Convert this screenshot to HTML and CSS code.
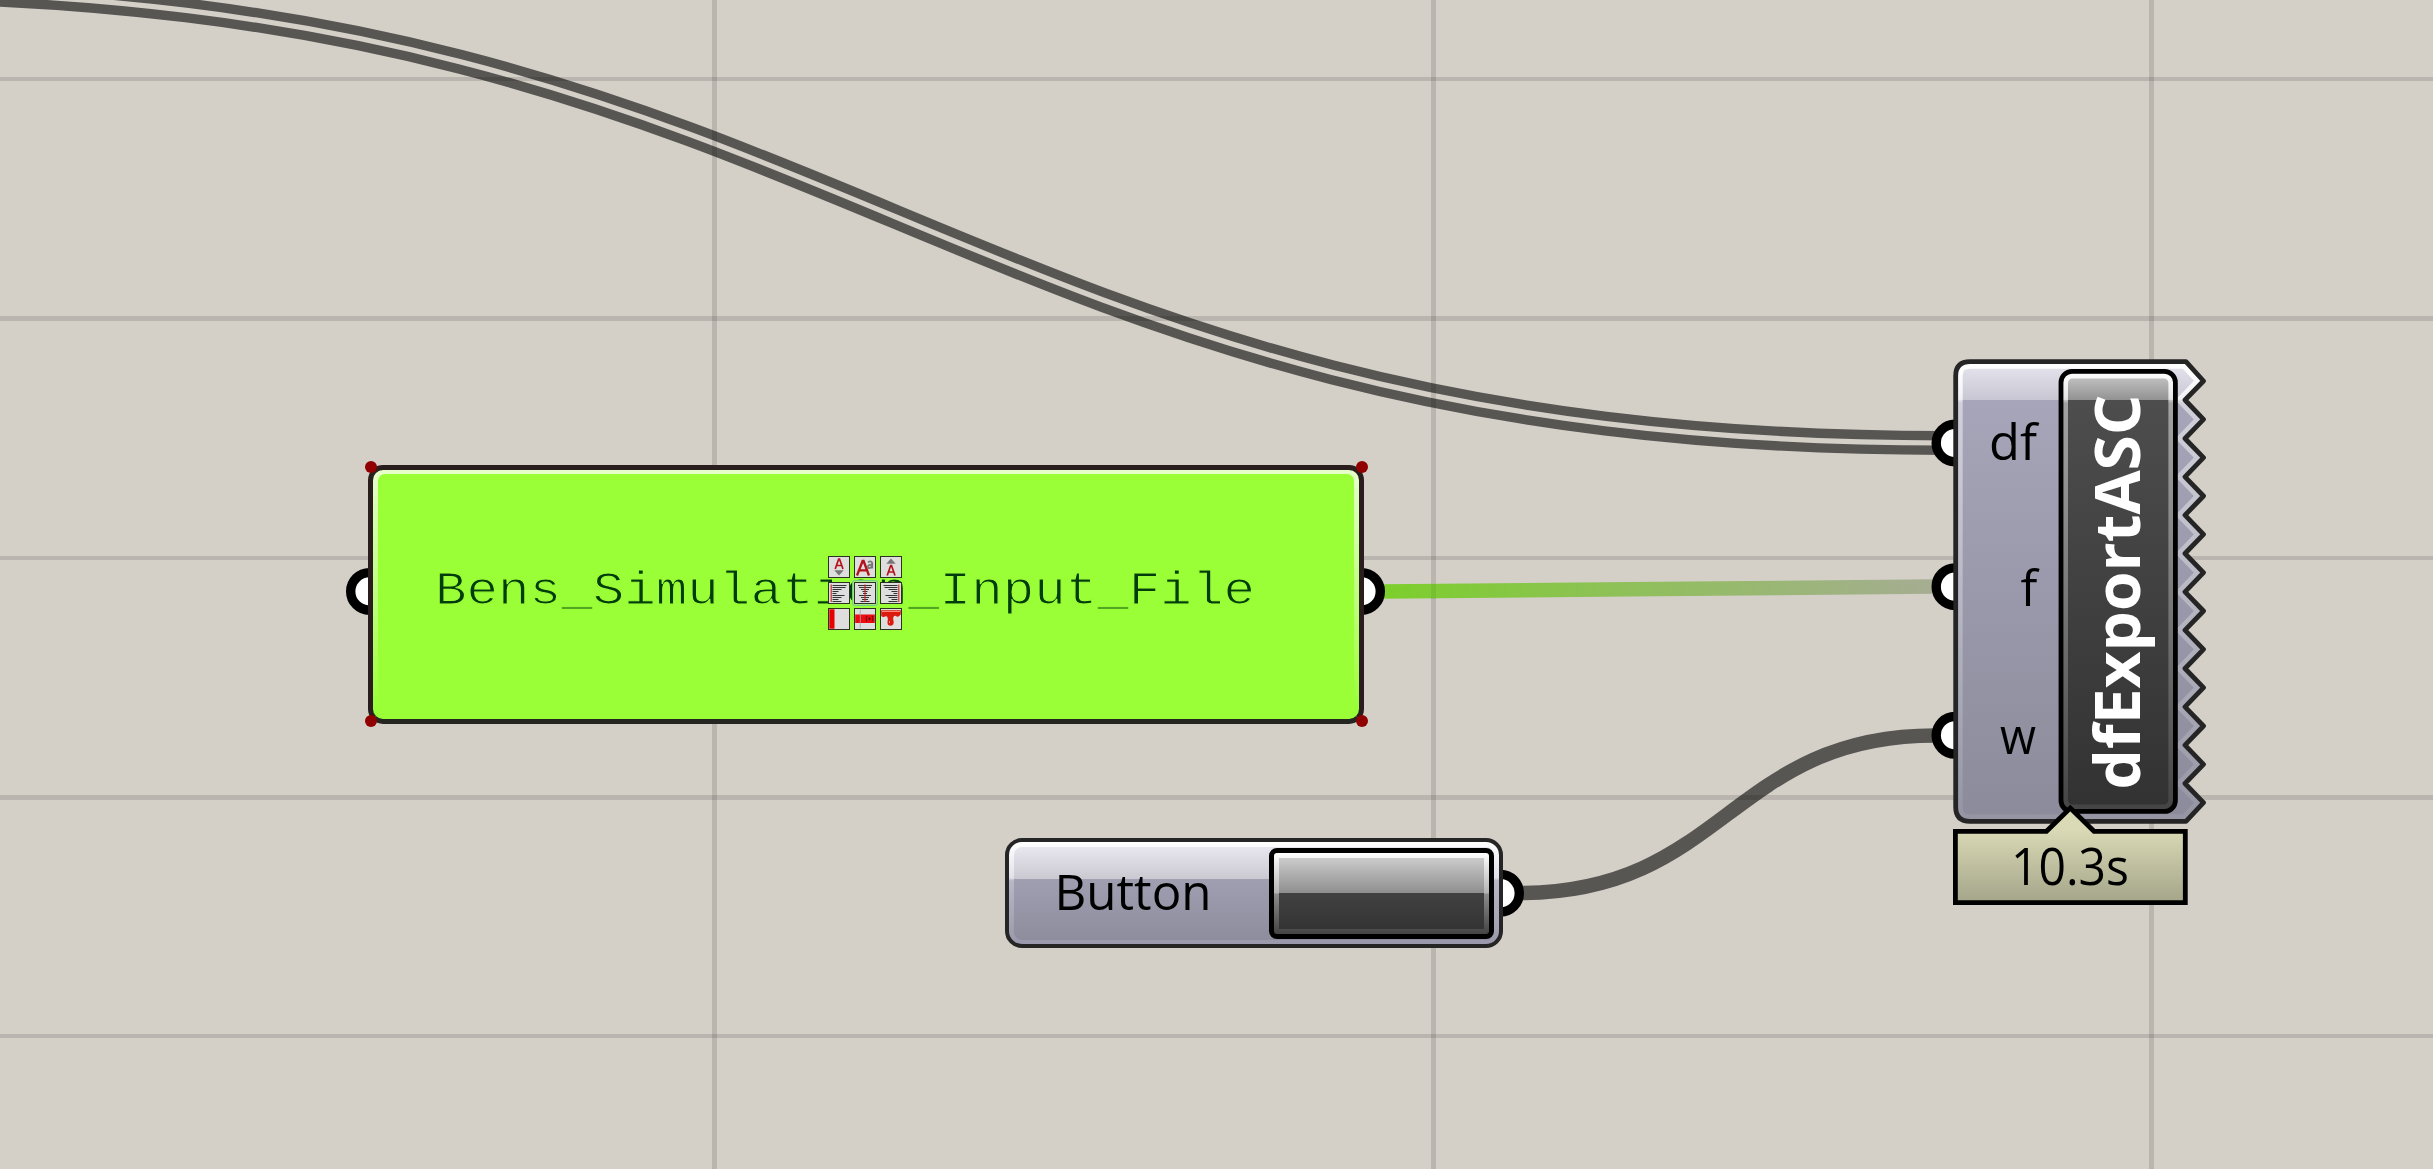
FILE: index.html
```html
<!DOCTYPE html>
<html lang="en">
<head>
<meta charset="utf-8">
<title>Definition canvas</title>
<link rel="stylesheet" href="styles.css">
</head>
<body>
<main class="canvas">
  <svg class="wires" viewBox="0 0 2433 1169">
    <defs>
      <mask id="core" maskUnits="userSpaceOnUse" x="-200" y="-100" width="2700" height="1300">
        <rect x="-200" y="-100" width="2700" height="1300" fill="#fff"/>
        <path d="M-153-9C860-9 932 443 1945 443" fill="none" stroke="#000" stroke-width="5.2"/>
      </mask>
      <linearGradient id="fade" gradientUnits="userSpaceOnUse" x1="1380" y1="0" x2="1935" y2="0">
        <stop offset="0" stop-color="#7ccf2b"/><stop offset="1" stop-color="#a6ad93"/>
      </linearGradient>
    </defs>
    <g class="grid">
      <path d="M714.5 0V1169M1433.5 0V1169M2151.500 0V1169"/>
      <path d="M0 79H2433M0 318.5H2433M0 558H2433M0 797.5H2433M0 1036H2433"/>
    </g>
    <path class="wire double" mask="url(#core)" d="M-153-9C860-9 932 443 1945 443"/>
    <path class="wire" d="M1520 893C1724 893 1731 735.5 1935 735.5"/>
    <path class="wire green" d="M1380 591.5C1565 591.5 1750 586.5 1935 586.5"/>
    <path class="grid" d="M1433.5 584V598.500" opacity=".5"/>
    <g class="grip">
      <circle cx="369.5" cy="591.4" r="18.8"/>
      <circle cx="1361.5" cy="591.4" r="18.8"/>
      <circle cx="1500.5" cy="893.2" r="18.8"/>
      <circle cx="1955" cy="443" r="18.8"/>
      <circle cx="1955" cy="586.7" r="18.8"/>
      <circle cx="1955" cy="735.3" r="18.8"/>
    </g>
  </svg>

  <section class="panel">
    <i class="handle tl"></i><i class="handle tr"></i><i class="handle bl"></i><i class="handle br"></i>
    <div class="panel-body">
      <svg class="panel-text" viewBox="0 0 986 249"><text x="62" y="134.300" textLength="820" lengthAdjust="spacingAndGlyphs">Bens_Simulation_Input_File</text></svg>
    </div>
    <div class="tools">
      <svg viewBox="0 0 22 22"><rect class="key" x=".5" y=".5" width="21" height="21"/><path d="M7.2 13L10.7 3h.8L15 13M8.6 9.5h5" fill="none" stroke="#b5121b" stroke-width="1.7"/><path d="M6.3 14.2h9.4L11 19.5z" fill="#777"/></svg>
      <svg viewBox="0 0 22 22"><rect class="key" x=".5" y=".5" width="21" height="21"/><path d="M3 19.5L8.6 5h1L15 19.5M5 14.3h8" fill="none" stroke="#b5121b" stroke-width="2.3"/><path d="M14 6.2q4-2 4.2 1.2v5M18 8.8q-4-.3-4 1.8 0 2 2 1.4l2-1.4" fill="none" stroke="#777" stroke-width="1.8"/></svg>
      <svg viewBox="0 0 22 22"><rect class="key" x=".5" y=".5" width="21" height="21"/><path d="M6.3 7.8h9.4L11 2.5z" fill="#777"/><path d="M7.2 19.5L10.7 9.5h.8l3.5 10M8.6 16h5" fill="none" stroke="#b5121b" stroke-width="1.7"/></svg>

      <svg viewBox="0 0 22 22"><rect class="key" x=".5" y=".5" width="21" height="21"/><path d="M4.5 3.5h14M4.5 5.5h13M4.5 7.5h9M4.5 9.5h6M4.5 11.500h4M4.500 13.500h12M4.500 15.500h9M4.500 17.500h6M4.500 19.500h9" class="lines"/><path d="M3.200 2.500v17.500" class="rule"/></svg>
      <svg viewBox="0 0 22 22"><rect class="halo" x="-1.500" y="-1.500" width="25" height="25" rx="2"/><rect class="key" x=".5" y=".5" width="21" height="21"/><path d="M4 3.500h14M5 5.500h12M7 7.500h8M8.500 9.500h5M9 11.500h4M5 13.500h12M7 15.500h8M8 17.500h6M6.500 19.500h9" class="lines"/><path d="M11 2.500v17.500" class="rule"/></svg>
      <svg viewBox="0 0 22 22"><rect class="key" x=".5" y=".5" width="21" height="21"/><path d="M17.500 3.500h-14M17.500 5.500h-13M17.500 7.500h-9M17.500 9.500h-6M17.500 11.500h-4M17.500 13.500h-12M17.500 15.500h-9M17.500 17.500h-6M17.500 19.500h-9" class="lines"/><path d="M18.800 2.500v17.500" class="rule"/></svg>

      <svg viewBox="0 0 22 22"><rect class="key" x=".5" y=".5" width="21" height="21"/><path d="M1.300 1.300h5.200v19.400H1.300z" fill="#e60000"/></svg>
      <svg viewBox="0 0 22 22"><rect class="key" x=".5" y=".5" width="21" height="21"/><path d="M1.200 6.500h19.600v8.500H1.200z" fill="#ee0a10"/><path d="M6.300 1.500v19" stroke="#9aa" stroke-width=".8"/><path d="M13.300 8.500h-1v4.500h1M17.800 8.500h1v4.500h-1M14 10.800h3M15.500 9.300v3" fill="none" stroke="#5a0505" stroke-width=".9"/></svg>
      <svg viewBox="0 0 22 22"><rect class="key" x=".5" y=".5" width="21" height="21"/><path d="M1.200 2.200h19.600v4q-2 3.300-4 2.200-2-1.400-3.400.6-.6 2 .2 4.200.6 4-2.800 4.600-3.800 0-3.300-4.200.8-3.200-.4-5-1.500-1-2.800.2-1.800.8-3.100-1z" fill="#dc1a10"/><path d="M2 3.500h18M9.500 13v2" stroke="#ff8a7a" stroke-width="1"/></svg>
    </div>
  </section>

  <section class="button-node">
    <div class="shine"></div>
    <svg class="button-label" viewBox="0 0 200 100"><text x="45.500" y="67.300" textLength="157" lengthAdjust="spacingAndGlyphs">Button</text></svg>
    <div class="push"></div>
  </section>

  <svg class="component" viewBox="1940 350 280 570">
    <defs>
      <clipPath id="shape"><path id="outline" d="M1970 361.700H2186L2203.500 381 2185 400 2203.500 419.300 2185 438.500 2203.500 457.700 2185 476.800 2203.500 496 2185 515.200 2203.500 534.300 2185 553.500 2203.500 572.600 2185 591.800 2203.500 611 2185 630.200 2203.500 649.300 2185 668.500 2203.500 687.700 2185 706.800 2203.500 726 2185 745.200 2203.500 764.300 2185 783.500 2203.500 802.700 2186 821.300H1970Q1955.700 821.300 1955.700 807V376Q1955.700 361.700 1970 361.700Z"/></clipPath>
      <linearGradient id="body" gradientUnits="userSpaceOnUse" x1="0" y1="362" x2="0" y2="821">
        <stop offset="0" stop-color="#e8e7f0"/><stop offset=".083" stop-color="#c7c6d2"/><stop offset=".083" stop-color="#a6a5b9"/><stop offset="1" stop-color="#8c8b9b"/>
      </linearGradient>
      <linearGradient id="rim" gradientUnits="userSpaceOnUse" x1="0" y1="362" x2="0" y2="821">
        <stop offset="0" stop-color="#fff"/><stop offset=".08" stop-color="#fff" stop-opacity=".75"/><stop offset=".09" stop-color="#fff" stop-opacity=".48"/><stop offset="1" stop-color="#fff" stop-opacity=".08"/>
      </linearGradient>
      <linearGradient id="dark" gradientUnits="userSpaceOnUse" x1="0" y1="371" x2="0" y2="811">
        <stop offset="0" stop-color="#cdcdcd"/><stop offset=".066" stop-color="#929292"/><stop offset=".066" stop-color="#4d4d4d"/><stop offset="1" stop-color="#323232"/>
      </linearGradient>
      <linearGradient id="tag" gradientUnits="userSpaceOnUse" x1="0" y1="829" x2="0" y2="905">
        <stop offset="0" stop-color="#dadab6"/><stop offset="1" stop-color="#a2a388"/>
      </linearGradient>
    </defs>
    <use href="#outline" fill="url(#body)"/>
    <use href="#outline" clip-path="url(#shape)" fill="none" stroke="url(#rim)" stroke-width="14"/>
    <use href="#outline" fill="none" stroke="#252525" stroke-width="4.800" stroke-linejoin="round"/>
    <rect x="2061" y="371.400" width="114.400" height="440" rx="11" fill="url(#dark)"/>
    <rect x="2065.500" y="376" width="105.400" height="431" rx="7" fill="none" stroke="url(#rim)" stroke-width="5"/>
    <rect x="2061" y="371.400" width="114.400" height="440" rx="11" fill="none" stroke="#000" stroke-width="4.800"/>
    <g class="port">
      <text x="1989" y="459.800" textLength="48" lengthAdjust="spacingAndGlyphs">df</text>
      <text x="2020.500" y="606">f</text>
      <text x="2000" y="754.300" textLength="36" lengthAdjust="spacingAndGlyphs">w</text>
    </g>
    <text class="name" transform="translate(2140.300 789.500) rotate(-90)" textLength="395" lengthAdjust="spacingAndGlyphs">dfExportASC</text>
    <path d="M1955.400 831.300H2046.500L2070.300 808 2094 831.300H2185.300V902.700H1955.400Z" fill="url(#tag)" stroke="#000" stroke-width="4.800"/>
    <text class="time" x="2011" y="884.600" textLength="118" lengthAdjust="spacingAndGlyphs">10.3s</text>
  </svg>
</main>
</body>
</html>
```

FILE: styles.css
```css
body {
  margin: 0;
}

.canvas {
  position: relative;
  width: 2433px;
  height: 1169px;
  overflow: hidden;
  background: #d4d0c8;
  font-family: "Open Sans", "Noto Sans", sans-serif;
}

.wires {
  display: block;
  width: 2433px;
  height: 1169px;
}

.grid {
  fill: none;
  stroke: rgba(0, 0, 0, 0.12);
  stroke-width: 4.8;
  shape-rendering: crispEdges;
}

.wire {
  fill: none;
  stroke: rgba(0, 0, 0, 0.59);
  stroke-width: 14.5;
}

.wire.double {
  stroke-width: 24;
}

.wire.green {
  stroke: url(#fade);
}

.grip circle {
  fill: #fff;
  stroke: #000;
  stroke-width: 9.4;
}

/* Text panel */
.panel {
  position: absolute;
  left: 368px;
  top: 464.5px;
  width: 996px;
  height: 259px;
}

.panel-body {
  box-sizing: border-box;
  position: relative;
  width: 100%;
  height: 100%;
  border: 5px solid #2a1d1d;
  border-bottom-color: #252521;
  border-radius: 15px;
  background: linear-gradient(#e6ffcb, #9aff36 97%);
}

.panel-body::before {
  content: "";
  position: absolute;
  inset: 4.5px 5px 0;
  border-radius: 7px;
  background: #9aff36;
}

.panel-text {
  position: relative;
  display: block;
  width: 986px;
  height: 249px;
  font: 46.5px "Courier New", "Liberation Mono", monospace;
  fill: #003c0c;
  stroke: #9aff36;
  stroke-width: 1.1px;
}

.handle {
  position: absolute;
  z-index: 1;
  width: 12px;
  height: 12px;
  border-radius: 50%;
  background: #900000;
}

.tl { left: -3.5px; top: -4px; }
.tr { right: -3.5px; top: -4px; }
.bl { left: -3.5px; bottom: -3px; }
.br { right: -3.5px; bottom: -3px; }

.tools {
  position: absolute;
  left: 460px;
  top: 91.5px;
  display: grid;
  grid-template-columns: repeat(3, 22px);
  grid-auto-rows: 22px;
  gap: 4px;
}

.tools svg {
  width: 22px;
  height: 22px;
  overflow: visible;
}

.key {
  fill: #dedede;
  stroke: #2b3320;
}

.halo {
  fill: #a8e87a;
  stroke: #6fcf86;
}

.lines {
  stroke: #333;
  stroke-width: 1;
}

.rule {
  stroke: #c22;
  stroke-width: 1.1;
}

/* Button node */
.button-node {
  position: absolute;
  left: 1005px;
  top: 838.3px;
  box-sizing: border-box;
  display: flex;
  align-items: center;
  width: 497.5px;
  height: 110px;
  padding: 0 5px 0 0;
  border: 4.7px solid #252525;
  border-radius: 17px;
  background: linear-gradient(#fff, #e2e1ea 35%, #b8b7c6 38%, #9a99ab);
}

.shine {
  position: absolute;
  inset: 4.7px;
  border-radius: 8px;
  background: linear-gradient(#e8e7f0, #cac9d2 34.5%, #a09fb2 34.5%, #8e8d9d);
}

.button-label {
  position: relative;
  width: 200px;
  height: 100px;
  overflow: visible;
  font-size: 49.5px;
}

.push {
  position: relative;
  box-sizing: border-box;
  width: 225px;
  height: 91px;
  margin-left: auto;
  border: 5px solid #000;
  border-radius: 8px;
  background: linear-gradient(#fff, #b5b5b5 49%, #8c8c8c 51%, #444);
}

.push::before {
  content: "";
  position: absolute;
  inset: 5px;
  background: linear-gradient(#cbcbcb, #8e8e8e 50%, #414141 50%, #343434);
}

/* Export component */
.component {
  position: absolute;
  left: 1940px;
  top: 350px;
  width: 280px;
  height: 570px;
}

.port {
  font-size: 50px;
}

.name {
  font-size: 63px;
  font-weight: 700;
  fill: #fff;
}

.time {
  font-size: 52px;
}
```
